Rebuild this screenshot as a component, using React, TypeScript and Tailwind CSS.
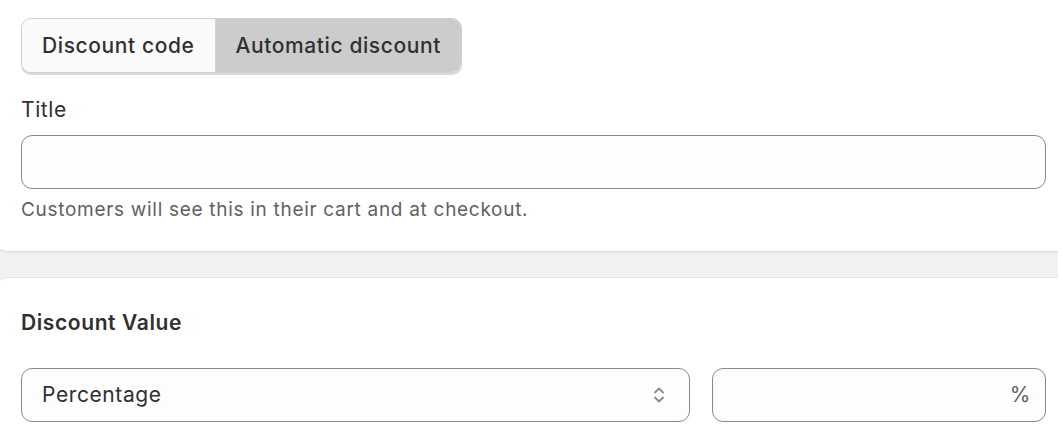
import React, { useState } from 'react';

const ChevronUpDown = () => (
  <svg width="14" height="22" viewBox="0 0 14 22" fill="none" stroke="#8a8a8a" strokeWidth="1.8" strokeLinecap="round" strokeLinejoin="round">
    <path d="M3 8.5 7 4.5l4 4" />
    <path d="M3 13.5l4 4 4-4" />
  </svg>
);

export default function App() {
  const [mode, setMode] = useState<'code' | 'automatic'>('automatic');
  const [title, setTitle] = useState('');
  const [value, setValue] = useState('');

  return (
    <div className="h-[436px] bg-white pr-[4px] text-[#303030] font-['Inter',sans-serif] tracking-[0.6px]">
      <div className="h-full bg-[#f1f1f1] overflow-hidden">
        <div className="bg-white -ml-[6px] -mr-[20px] rounded-b-[14px] shadow-[0_1px_0_#e0e0e0,0_2px_2px_rgba(0,0,0,0.04)] pl-[27px] pr-[32px] pt-[18px] pb-[28px]">
          <div className="inline-flex rounded-[10px] border border-[#cfcfcf] shadow-[0_2px_0_#d9d9d9] overflow-hidden">
            <button
              onClick={() => setMode('code')}
              className={
                'h-[53px] pt-[1px] px-[20px] text-[21px] font-medium tracking-[0.6px] ' +
                (mode === 'code' ? 'bg-[#cccccc]' : 'bg-[#fafafa]')
              }
            >
              Discount code
            </button>
            <button
              onClick={() => setMode('automatic')}
              className={
                'h-[53px] pt-[1px] px-[20px] text-[21px] font-medium tracking-[0.6px] border-l border-[#d6d6d6] ' +
                (mode === 'automatic' ? 'bg-[#cccccc]' : 'bg-[#fafafa]')
              }
            >
              Automatic discount
            </button>
          </div>

          <label htmlFor="title" className="block mt-[23px] text-[21px] leading-[28px]">
            Title
          </label>
          <input
            id="title"
            value={title}
            onChange={e => setTitle(e.target.value)}
            className="mt-[11px] block w-full h-[54px] rounded-[11px] border border-[#8a8a8a] bg-[#fdfdfd] px-[20px] text-[21px] outline-none"
          />
          <p className="mt-[8px] text-[19px] leading-[26px] tracking-[0.7px] text-[#616161]">
            Customers will see this in their cart and at checkout.
          </p>
        </div>

        <div className="mt-[27px] bg-white -ml-[6px] -mr-[20px] rounded-t-[14px] shadow-[0_-1px_0_#e6e6e6] pl-[27px] pr-[32px] pt-[31px] pb-[16px]">
          <h2 className="text-[21px] leading-[28px] font-semibold">Discount Value</h2>
          <div className="mt-[31px] grid grid-cols-[minmax(0,2fr)_minmax(0,1fr)] gap-[22px]">
            <div className="relative">
              <select className="block w-full h-[54px] appearance-none rounded-[11px] border border-[#8a8a8a] bg-[#fdfdfd] pl-[20px] pr-[48px] text-[21px] tracking-[0.6px] text-[#303030] outline-none">
                <option>Percentage</option>
                <option>Fixed amount</option>
              </select>
              <span className="pointer-events-none absolute right-[24px] top-1/2 -translate-y-1/2">
                <ChevronUpDown />
              </span>
            </div>
            <div className="flex items-center h-[54px] rounded-[11px] border border-[#8a8a8a] bg-[#fdfdfd] pl-[16px] pr-[14px]">
              <input
                value={value}
                onChange={e => setValue(e.target.value)}
                className="flex-1 min-w-0 bg-transparent text-[21px] outline-none text-right"
              />
              <span className="ml-[6px] text-[21px] text-[#616161]">%</span>
            </div>
          </div>
        </div>
      </div>
    </div>
  );
}
